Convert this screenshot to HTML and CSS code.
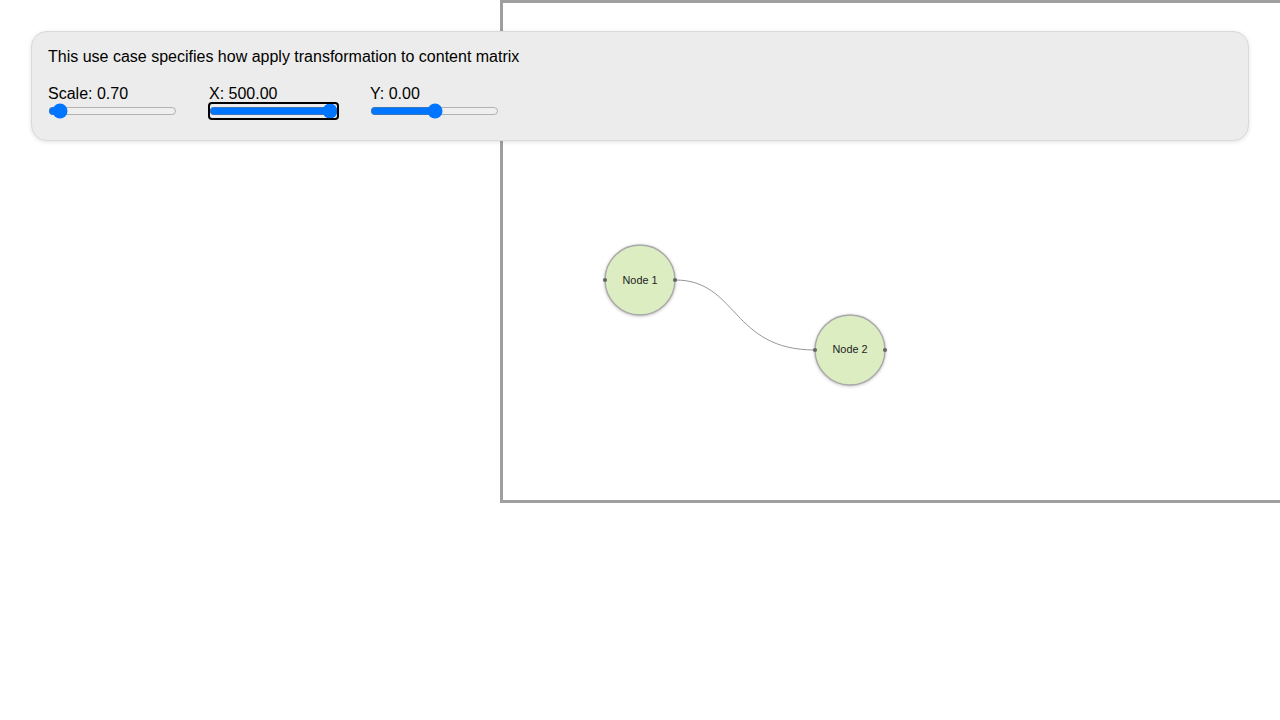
FILE: index.html
```html
<!DOCTYPE html>
<html>
<head>
<meta charset="utf-8">
<link rel="stylesheet" href="styles.css">
</head>
<body>
<div class="canvas">
  <svg class="scene" width="1000" height="500" viewBox="0 0 1000 500">
    <g transform="translate(-3,-3) scale(0.7)">
      <path class="edge" d="M250 400 C 340 400, 330 500, 450 500" />
      <g class="node">
        <circle cx="200" cy="400" r="50" />
        <text x="200" y="405">Node 1</text>
        <circle class="port" cx="150" cy="400" r="3" />
        <circle class="port" cx="250" cy="400" r="3" />
      </g>
      <g class="node">
        <circle cx="500" cy="500" r="50" />
        <text x="500" y="504">Node 2</text>
        <circle class="port" cx="450" cy="500" r="3" />
        <circle class="port" cx="550" cy="500" r="3" />
      </g>
    </g>
  </svg>
</div>
<div class="panel">
  <p class="desc">This use case specifies how apply transformation to content matrix</p>
  <div class="controls">
    <label class="control">Scale: 0.70<br><input type="range" min="0.5" max="6" step="0.01" value="0.7"></label>
    <label class="control">X: 500.00<br><input class="focused" type="range" min="-500" max="500" step="1" value="500"></label>
    <label class="control">Y: 0.00<br><input type="range" min="-500" max="500" step="1" value="0"></label>
  </div>
</div>
</body>
</html>
```
FILE: styles.css
```css
html, body {
  margin: 0;
  padding: 0;
  background: #fff;
  font-family: "Liberation Sans", Arial, sans-serif;
  font-size: 16px;
  color: #000;
}
.canvas {
  position: absolute;
  left: 500px;
  top: 0;
  width: 1000px;
  height: 497px;
  border: 3px solid #9f9f9f;
  overflow: hidden;
}
.scene {
  display: block;
}
.edge {
  fill: none;
  stroke: #8c8c8c;
  stroke-width: 1.3;
}
.node circle {
  fill: #dcedc1;
  stroke: #a9a9a9;
  stroke-width: 2;
  filter: drop-shadow(0 1px 2px rgba(0,0,0,0.25));
}
.node circle.port {
  fill: #666;
  stroke: none;
  filter: none;
}
.node text {
  font-family: "Liberation Sans", Arial, sans-serif;
  font-size: 15.5px;
  text-anchor: middle;
  fill: #222;
}
.panel {
  position: absolute;
  left: 31px;
  top: 31px;
  width: 1184px;
  padding: 16px 16px 17px;
  background: #ececec;
  border: 1px solid #dadada;
  border-radius: 16px;
  box-shadow: 0 1px 4px rgba(0,0,0,0.12);
}
.desc {
  margin: 0 0 19px;
  line-height: 18px;
}
.controls {
  display: flex;
  gap: 32px;
}
.control {
  display: block;
  line-height: 18px;
}
.control input {
  margin: 0;
  width: 129px;
}
.focused {
  outline: 2px solid #000;
  outline-offset: -1px;
  border-radius: 3px;
}
```
